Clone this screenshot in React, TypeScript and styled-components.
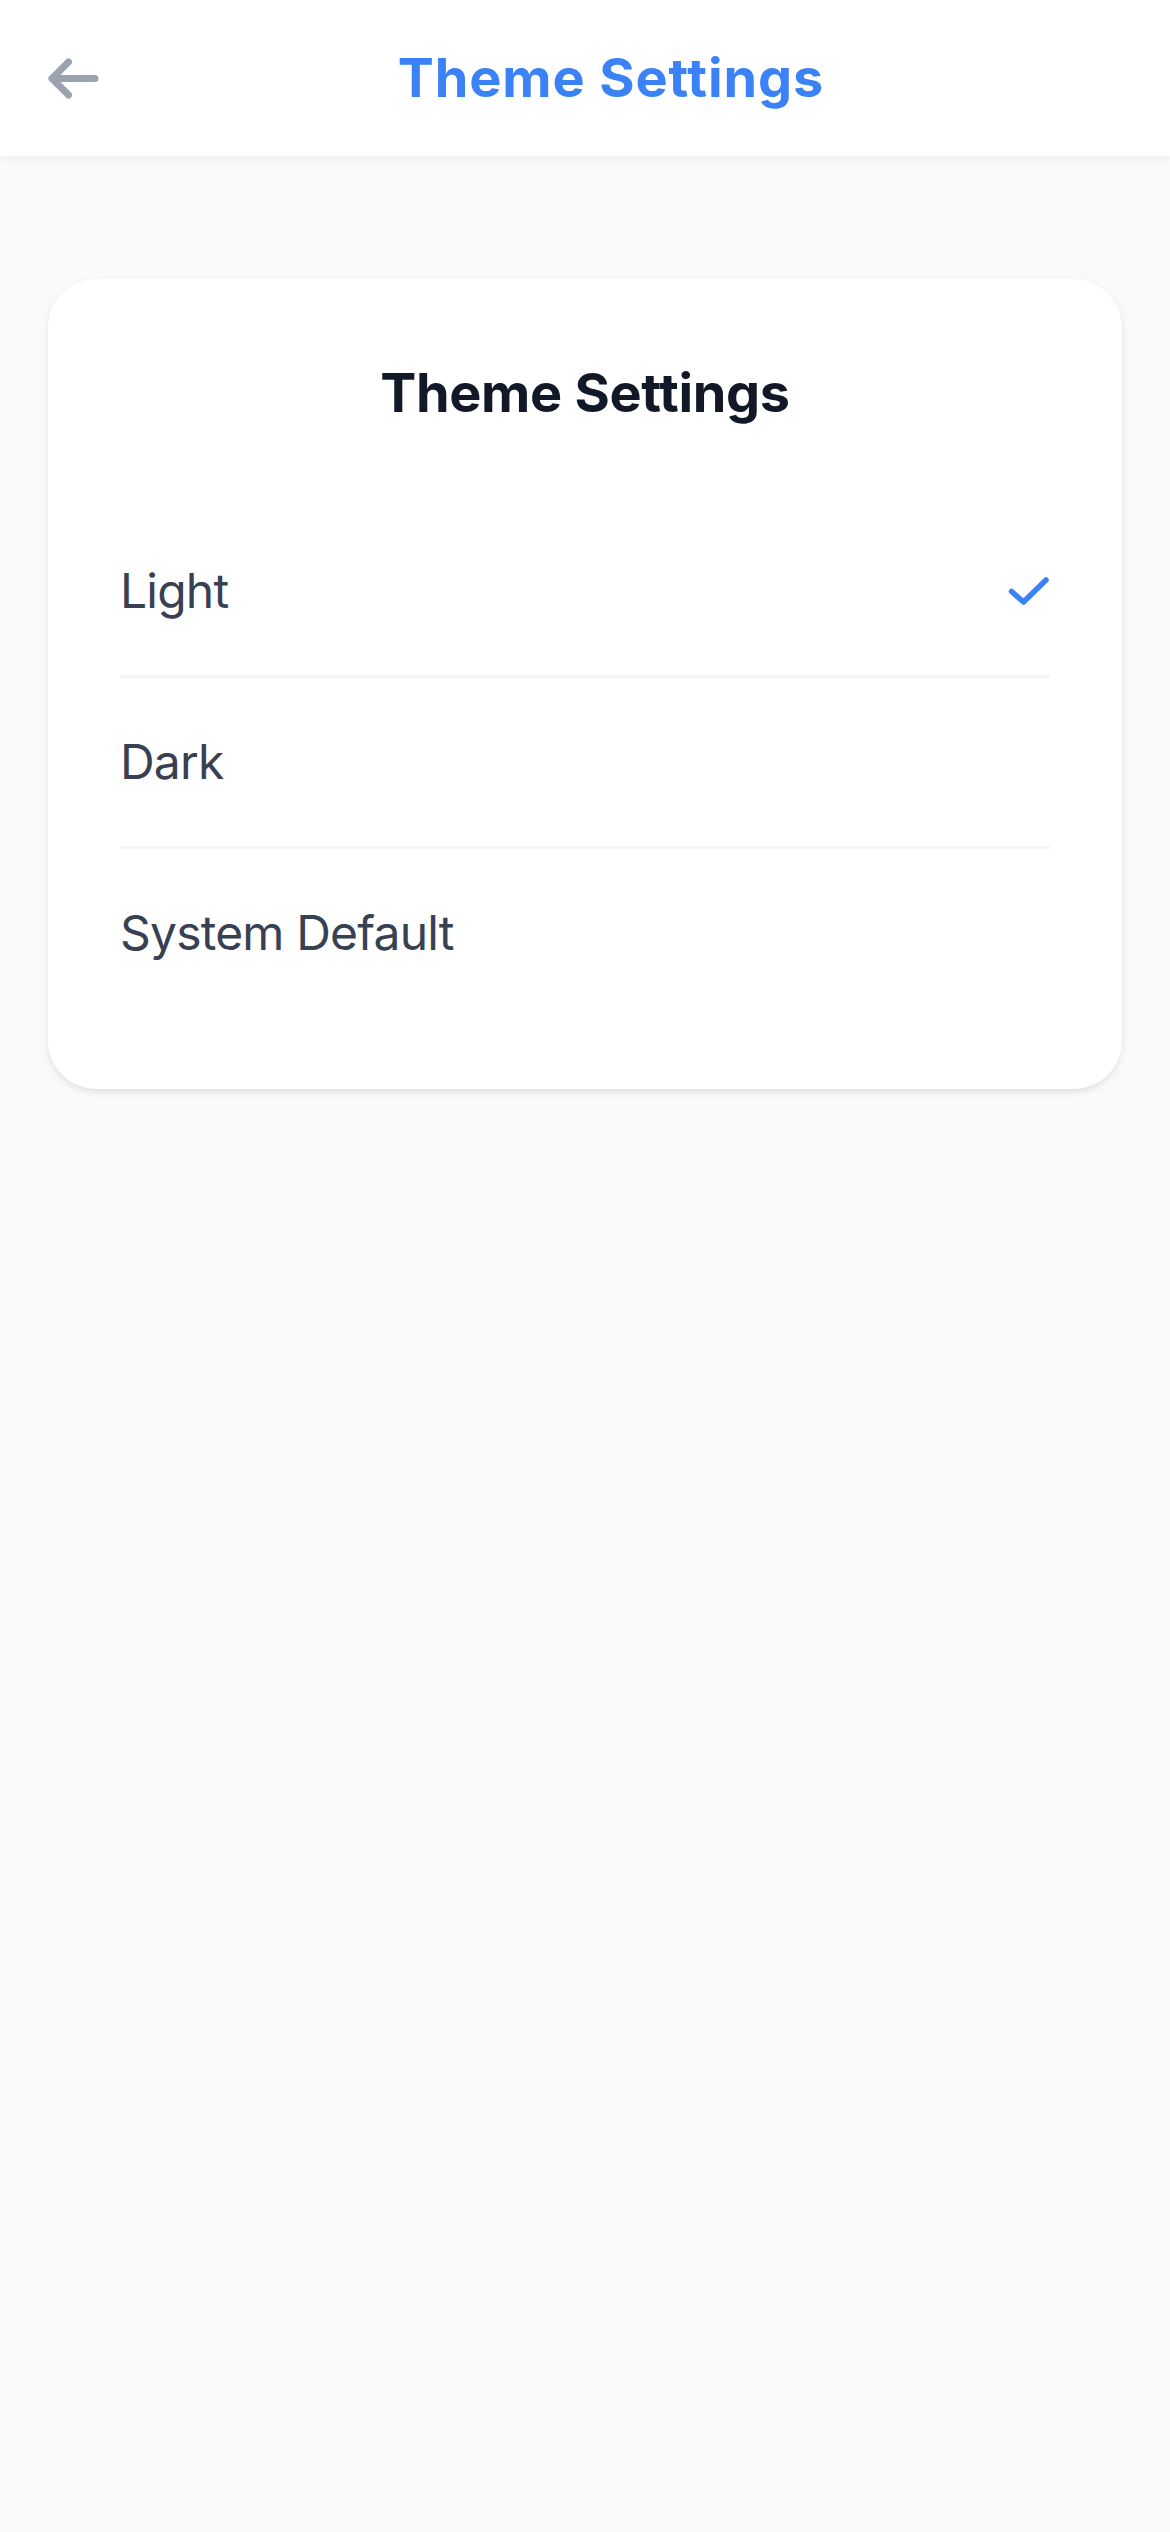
import React, { useState } from "react"
import styled, { createGlobalStyle } from "styled-components"

const themes = ["Light", "Dark", "System Default"]

const App: React.FC<{}> = ({}) => {
  const [selected, setSelected] = useState("Light")

  return (
    <PageContainer>
      <GlobalStyle />
      <Header>
        <BackButton aria-label="Back">
          <svg width="60" height="48" viewBox="0 0 60 48" fill="none">
            <path
              d="M47 24.5H4M4 24.5L20.5 8M4 24.5L20.5 41"
              stroke="#9ca3af"
              strokeWidth="7"
              strokeLinecap="round"
              strokeLinejoin="round"
            />
          </svg>
        </BackButton>
        <HeaderTitle>Theme Settings</HeaderTitle>
      </Header>
      <Main>
        <Card>
          <CardTitle>Theme Settings</CardTitle>
          <OptionList>
            {themes.map((theme, i) => (
              <OptionRow
                key={theme}
                $last={i === themes.length - 1}
                onClick={() => setSelected(theme)}
              >
                <OptionLabel>{theme}</OptionLabel>
                {selected === theme && (
                  <svg width="48" height="40" viewBox="0 0 48 40" fill="none">
                    <path
                      d="M9.5 20.5L21.5 31L44 9"
                      stroke="#3b82f6"
                      strokeWidth="5.5"
                      strokeLinecap="round"
                      strokeLinejoin="round"
                    />
                  </svg>
                )}
              </OptionRow>
            ))}
          </OptionList>
        </Card>
      </Main>
    </PageContainer>
  )
}

const GlobalStyle = createGlobalStyle`
  html, body {
    margin: 0;
    padding: 0;
    background: #f9fafb;
    font-family: Inter, "Noto Sans", "Liberation Sans", sans-serif;
  }
  * {
    box-sizing: border-box;
  }
`

const PageContainer = styled.div`
  min-height: 2532px;
  background: #f9fafb;
`

const Header = styled.header`
  height: 156px;
  display: flex;
  align-items: center;
  padding: 0 56px 0 48px;
  background: #ffffff;
  box-shadow: 0 3px 6px rgba(0, 0, 0, 0.05);
  position: relative;
  z-index: 1;
`

const BackButton = styled.button`
  width: 60px;
  height: 48px;
  padding: 0;
  border: none;
  background: transparent;
  display: flex;
  align-items: center;
  cursor: pointer;
`

const HeaderTitle = styled.h1`
  flex: 1;
  margin: 0;
  text-align: center;
  font-size: 54px;
  line-height: 84px;
  font-weight: 700;
  letter-spacing: 0.9px;
  color: #3b82f6;
`

const Main = styled.main`
  padding: 123px 48px;
`

const Card = styled.section`
  background: #ffffff;
  border-radius: 48px;
  padding: 72px;
  box-shadow: 0 3px 9px rgba(0, 0, 0, 0.08), 0 3px 6px -3px rgba(0, 0, 0, 0.08);
`

const CardTitle = styled.h2`
  margin: 0 0 72px;
  text-align: center;
  font-size: 54px;
  line-height: 84px;
  font-weight: 700;
  letter-spacing: -0.3px;
  color: #111827;
`

const OptionList = styled.div`
  display: flex;
  flex-direction: column;
`

const OptionRow = styled.div<{ $last: boolean }>`
  height: ${p => (p.$last ? "168px" : "171px")};
  display: flex;
  align-items: center;
  justify-content: space-between;
  border-bottom: ${p => (p.$last ? "none" : "3px solid #f3f4f6")};
  cursor: pointer;
`

const OptionLabel = styled.span`
  font-size: 48px;
  line-height: 72px;
  letter-spacing: -0.8px;
  color: #374151;
`

export default App
